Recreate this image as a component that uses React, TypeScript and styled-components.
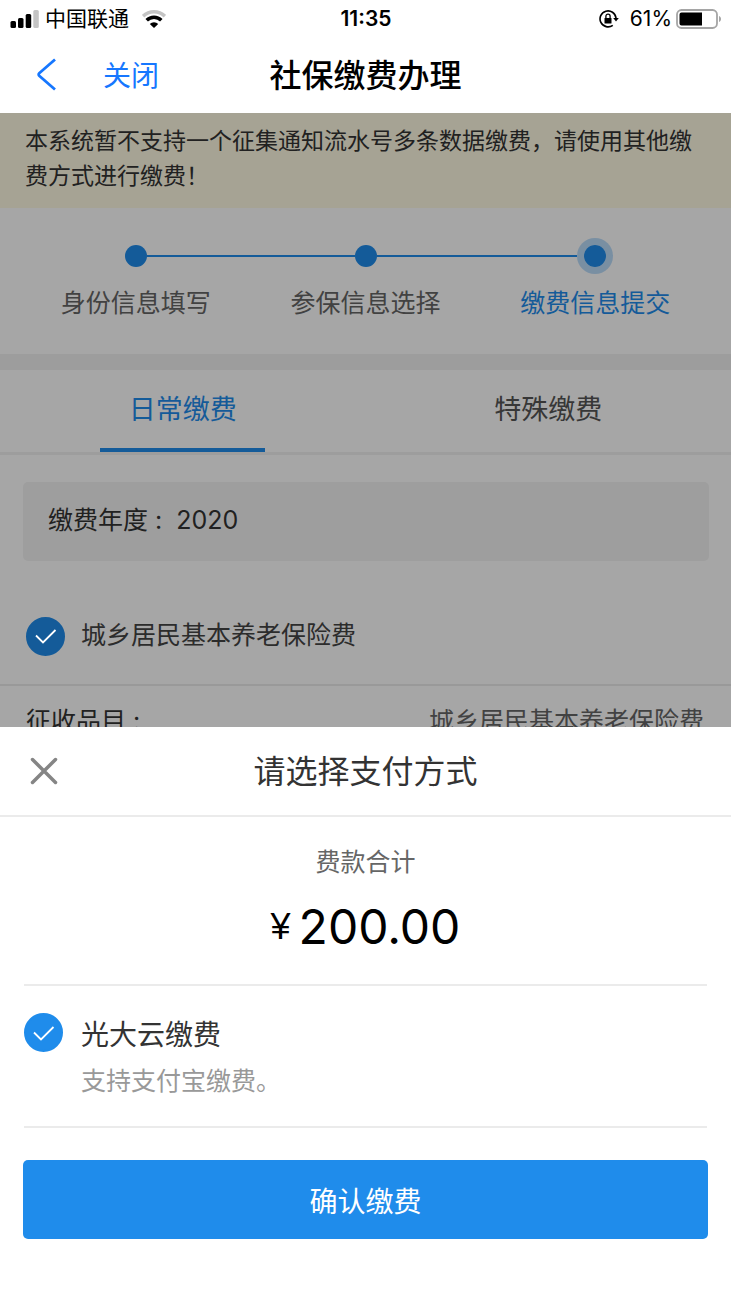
import React, { useState } from 'react';
import styled, { createGlobalStyle } from 'styled-components';

const blue = '#1f8ceb';
const line = '#ebebeb';

const GlobalStyle = createGlobalStyle`
  *, *::before, *::after { box-sizing: border-box; }
  body {
    margin: 0;
    background: #fff;
    color: #333;
    font-family: Inter, "Noto Sans CJK SC", sans-serif;
    font-size: 25px;
  }
  button {
    margin: 0;
    padding: 0;
    border: 0;
    background: none;
    color: inherit;
    font: inherit;
    cursor: pointer;
  }
  h1, h2, p, dl, dt, dd, ol { margin: 0; padding: 0; }
`;

const Page = styled.div`
  display: flex;
  flex-direction: column;
  min-height: 100vh;
`;

const StatusBar = styled.div`
  display: grid;
  grid-template-columns: 1fr auto 1fr;
  align-items: center;
  height: 37px;
  padding: 0 9px 0 10px;
  color: #000;
  font-size: 21px;
  line-height: 30px;
`;

const StatusGroup = styled.div<{ $end?: boolean }>`
  display: flex;
  align-items: center;
  justify-content: ${(p) => (p.$end ? 'flex-end' : 'flex-start')};
  gap: ${(p) => (p.$end ? 4 : 6)}px;
`;

const Clock = styled.time`
  font-size: 21px;
  font-weight: 600;
`;

const Spaced = styled.span`
  display: flex;
  margin: 0 7px;
`;

const NavBar = styled.header`
  display: grid;
  grid-template-columns: 1fr auto 1fr;
  align-items: center;
  height: 76px;
  padding: 0 36px;
  color: #000;
`;

const NavActions = styled.div`
  display: flex;
  align-items: center;
  gap: 45px;
`;

const NavButton = styled.button`
  display: flex;
  color: #1677ff;
`;

const NavLabel = styled.span`
  padding-top: 2px;
  font-size: 28px;
  line-height: 40px;
`;

const NavTitle = styled.h1`
  padding-top: 2px;
  font-size: 32px;
  font-weight: 500;
  line-height: 44px;
`;

const Stage = styled.main`
  position: relative;
  flex: 1;
`;

const Notice = styled.p`
  padding: 11px 25px 14px;
  background: #fffae4;
  font-size: 23px;
  line-height: 35px;
`;

const Steps = styled.ol`
  display: grid;
  grid-template-columns: repeat(3, 1fr);
  height: 146px;
  padding: 30px 21px 0;
  list-style: none;
`;

const Step = styled.li<{ $current?: boolean }>`
  display: flex;
  flex-direction: column;
  gap: 11px;
  color: ${(p) => (p.$current ? blue : '#666')};
  line-height: 36px;
  text-align: center;
`;

const Track = styled.div`
  display: flex;
  align-items: center;
  height: 36px;
`;

const Rail = styled.span<{ $hidden?: boolean }>`
  flex: 1;
  height: 2px;
  background: ${(p) => (p.$hidden ? 'transparent' : blue)};
`;

const Dot = styled.span<{ $current?: boolean }>`
  width: ${(p) => (p.$current ? 36 : 22)}px;
  height: ${(p) => (p.$current ? 36 : 22)}px;
  border: ${(p) => (p.$current ? '7px solid rgba(31, 140, 235, 0.3)' : '0')};
  border-radius: 50%;
  background: ${blue};
  background-clip: padding-box;
`;

const Tabs = styled.div`
  display: grid;
  grid-template-columns: 1fr 1fr;
  border-top: 16px solid #f2f2f2;
  border-bottom: 3px solid #f2f2f2;
`;

const Tab = styled.button<{ $active: boolean }>`
  display: flex;
  flex-direction: column;
  align-items: center;
  justify-content: space-between;
  height: 82px;
  padding-top: 20px;
  color: ${(p) => (p.$active ? blue : '#555')};
  font-size: 27px;
  line-height: 40px;

  &::after {
    width: 165px;
    height: 4px;
    background: ${(p) => (p.$active ? blue : 'transparent')};
    content: '';
  }
`;

const YearBox = styled.dl`
  display: flex;
  align-items: center;
  gap: 14px;
  height: 79px;
  margin: 27px 22px 0 23px;
  padding: 0 25px 4px;
  border-radius: 5px;
  background: #f3f3f3;
  line-height: 36px;
`;

const ItemChoice = styled.label`
  display: flex;
  align-items: center;
  gap: 16px;
  height: 125px;
  padding: 27px 26px 0;
  border-bottom: 2px solid ${line};
  color: #444;
  line-height: 44px;
`;

const ItemText = styled.span`
  padding-bottom: 2px;
`;

const Detail = styled.dl`
  display: flex;
  justify-content: space-between;
  padding: 17px 27px 0 26px;
  line-height: 36px;
`;

const DetailValue = styled.dd`
  color: #666;
`;

const CheckCell = styled.span`
  display: grid;
  flex: none;
  place-items: center;
  width: 39px;
  height: 39px;

  > * { grid-area: 1 / 1; }
`;

const RoundInput = styled.input`
  width: 100%;
  height: 100%;
  margin: 0;
  border: 2px solid #ccc;
  border-radius: 50%;
  appearance: none;
  cursor: pointer;

  &:checked {
    border-color: ${blue};
    background: ${blue};
  }
`;

const Tick = styled.svg`
  z-index: 1;
  pointer-events: none;
`;

const Backdrop = styled.div`
  position: absolute;
  inset: 0;
  display: flex;
  flex-direction: column;
  justify-content: flex-end;
  background: rgba(0, 0, 0, 0.35);
`;

const Sheet = styled.section`
  padding-bottom: 60px;
  background: #fff;
`;

const SheetHeader = styled.div`
  display: grid;
  grid-template-columns: 1fr auto 1fr;
  align-items: center;
  height: 90px;
  padding: 0 30px;
  border-bottom: 2px solid ${line};
`;

const CloseButton = styled.button`
  display: flex;
  justify-self: start;
`;

const SheetTitle = styled.h2`
  padding-top: 2px;
  font-size: 32px;
  font-weight: 400;
  line-height: 44px;
`;

const Total = styled.div`
  display: flex;
  flex-direction: column;
  align-items: center;
  height: 169px;
  margin: 0 24px;
  padding-top: 27px;
  border-bottom: 2px solid ${line};
`;

const TotalLabel = styled.p`
  color: #666;
  line-height: 36px;
`;

const Amount = styled.p`
  display: flex;
  align-items: center;
  gap: 8px;
  margin-top: 15px;
  color: #000;
  font-size: 48px;
  line-height: 64px;
`;

const Currency = styled.span`
  font-family: "Liberation Sans", Arial, sans-serif;
  font-size: 36px;
`;

const PayOption = styled.label`
  display: flex;
  gap: 18px;
  height: 142px;
  margin: 0 24px;
  padding-top: 27px;
  border-bottom: 2px solid ${line};
`;

const PayText = styled.span`
  display: flex;
  flex-direction: column;
  gap: 8px;
  padding-top: 2px;
  line-height: 36px;
`;

const PayName = styled.span`
  font-size: 28px;
  line-height: 40px;
`;

const PayHint = styled.span`
  color: #999;
`;

const ConfirmBar = styled.div`
  padding: 32px 23px 0;
`;

const ConfirmButton = styled.button`
  width: 100%;
  height: 79px;
  border-radius: 5px;
  background: ${blue};
  color: #fff;
  font-size: 28px;
`;

const SignalIcon = () => (
  <svg width="29" height="18" viewBox="0 0 29 18" aria-hidden="true">
    <rect x="0.500" y="11" width="5.500" height="7" rx="1.500" />
    <rect x="8" y="8" width="5.500" height="10" rx="1.500" />
    <rect x="15.700" y="4" width="5.500" height="14" rx="1.500" />
    <rect x="23.300" y="0" width="5.500" height="18" rx="1.500" fill="#c4c4c4" />
  </svg>
);

const WifiIcon = () => (
  <svg width="24" height="18" viewBox="0 0 24 18" fill="none" aria-hidden="true">
    <path d="M1.100 6.200a15.600 15.600 0 0 1 21.800 0" stroke="#c4c4c4" strokeWidth="3.500" />
    <path d="M4.700 10.300a10.300 10.300 0 0 1 14.600 0" stroke="#000" strokeWidth="3.500" />
    <path d="M7.800 14a6 6 0 0 1 8.400 0L12 18z" fill="#000" />
  </svg>
);

const RotationLockIcon = () => (
  <svg width="20" height="18" viewBox="0 0 20 18" fill="none" stroke="#000" aria-hidden="true">
    <path d="M13.800 15.300A8 8 0 1 1 17 8" strokeWidth="1.600" />
    <path d="M14.200 8h5.600L17 11.600z" fill="#000" stroke="none" />
    <rect x="5.500" y="8" width="7" height="5.600" rx="0.600" fill="#000" stroke="none" />
    <path d="M6.900 8V6.300a2.100 2.100 0 0 1 4.200 0V8" strokeWidth="1.300" />
  </svg>
);

const BatteryIcon = () => (
  <svg width="46" height="20" viewBox="0 0 46 20" fill="none" aria-hidden="true">
    <rect x="1" y="1" width="40" height="18" rx="4.500" stroke="#a5a5a5" strokeWidth="1.800" />
    <path d="M5.500 3.500H26v13H5.500a2 2 0 0 1-2-2v-9a2 2 0 0 1 2-2z" fill="#000" />
    <path d="M43 7c2.700 1 2.700 5 0 6z" fill="#a5a5a5" />
  </svg>
);

const BackIcon = () => (
  <svg width="22" height="34" viewBox="0 0 22 34" fill="none" stroke="currentColor" strokeWidth="2.800" aria-hidden="true">
    <path d="M19 1.500 3.200 15.300a1.600 1.600 0 0 0 0 2.400L19 31.500" />
  </svg>
);

const CloseIcon = () => (
  <svg width="28" height="28" viewBox="0 0 28 28" stroke="#858585" strokeWidth="3.500" strokeLinecap="round" aria-hidden="true">
    <path d="M2.500 2.500l23 23M25.500 2.500l-23 23" />
  </svg>
);

const TickIcon = () => (
  <Tick width="22" height="16" viewBox="0 0 22 16" fill="none" stroke="#fff" strokeWidth="1.800" aria-hidden="true">
    <path d="M1 7.500 8 14.500 20.500 2" />
  </Tick>
);

const steps = ['身份信息填写', '参保信息选择', '缴费信息提交'];
const tabs = ['日常缴费', '特殊缴费'];

export default function App() {
  const [tab, setTab] = useState(0);

  return (
    <Page lang="zh-CN">
      <GlobalStyle />
      <StatusBar>
        <StatusGroup>
          <SignalIcon />
          <span>中国联通</span>
          <Spaced><WifiIcon /></Spaced>
        </StatusGroup>
        <Clock>11:35</Clock>
        <StatusGroup $end>
          <Spaced><RotationLockIcon /></Spaced>
          <span>61%</span>
          <BatteryIcon />
        </StatusGroup>
      </StatusBar>
      <NavBar>
        <NavActions>
          <NavButton type="button" aria-label="返回"><BackIcon /></NavButton>
          <NavButton type="button"><NavLabel>关闭</NavLabel></NavButton>
        </NavActions>
        <NavTitle>社保缴费办理</NavTitle>
      </NavBar>

      <Stage>
        <Notice>本系统暂不支持一个征集通知流水号多条数据缴费，请使用其他缴费方式进行缴费！</Notice>
        <Steps>
          {steps.map((name, i) => {
            const current = i === steps.length - 1;
            return (
              <Step key={name} $current={current}>
                <Track>
                  <Rail $hidden={i === 0} />
                  <Dot $current={current} />
                  <Rail $hidden={current} />
                </Track>
                {name}
              </Step>
            );
          })}
        </Steps>
        <Tabs role="tablist">
          {tabs.map((name, i) => (
            <Tab key={name} type="button" role="tab" aria-selected={tab === i} $active={tab === i} onClick={() => setTab(i)}>
              {name}
            </Tab>
          ))}
        </Tabs>
        <YearBox>
          <dt>缴费年度 :</dt>
          <dd>2020</dd>
        </YearBox>
        <ItemChoice>
          <CheckCell>
            <RoundInput type="checkbox" defaultChecked />
            <TickIcon />
          </CheckCell>
          <ItemText>城乡居民基本养老保险费</ItemText>
        </ItemChoice>
        <Detail>
          <dt>征收品目 :</dt>
          <DetailValue>城乡居民基本养老保险费</DetailValue>
        </Detail>

        <Backdrop>
          <Sheet role="dialog" aria-labelledby="pay-title">
            <SheetHeader>
              <CloseButton type="button" aria-label="关闭"><CloseIcon /></CloseButton>
              <SheetTitle id="pay-title">请选择支付方式</SheetTitle>
            </SheetHeader>
            <Total>
              <TotalLabel>费款合计</TotalLabel>
              <Amount><Currency>¥</Currency>200.00</Amount>
            </Total>
            <PayOption>
              <CheckCell>
                <RoundInput type="radio" name="pay" defaultChecked />
                <TickIcon />
              </CheckCell>
              <PayText>
                <PayName>光大云缴费</PayName>
                <PayHint>支持支付宝缴费。</PayHint>
              </PayText>
            </PayOption>
            <ConfirmBar>
              <ConfirmButton type="button">确认缴费</ConfirmButton>
            </ConfirmBar>
          </Sheet>
        </Backdrop>
      </Stage>
    </Page>
  );
}
